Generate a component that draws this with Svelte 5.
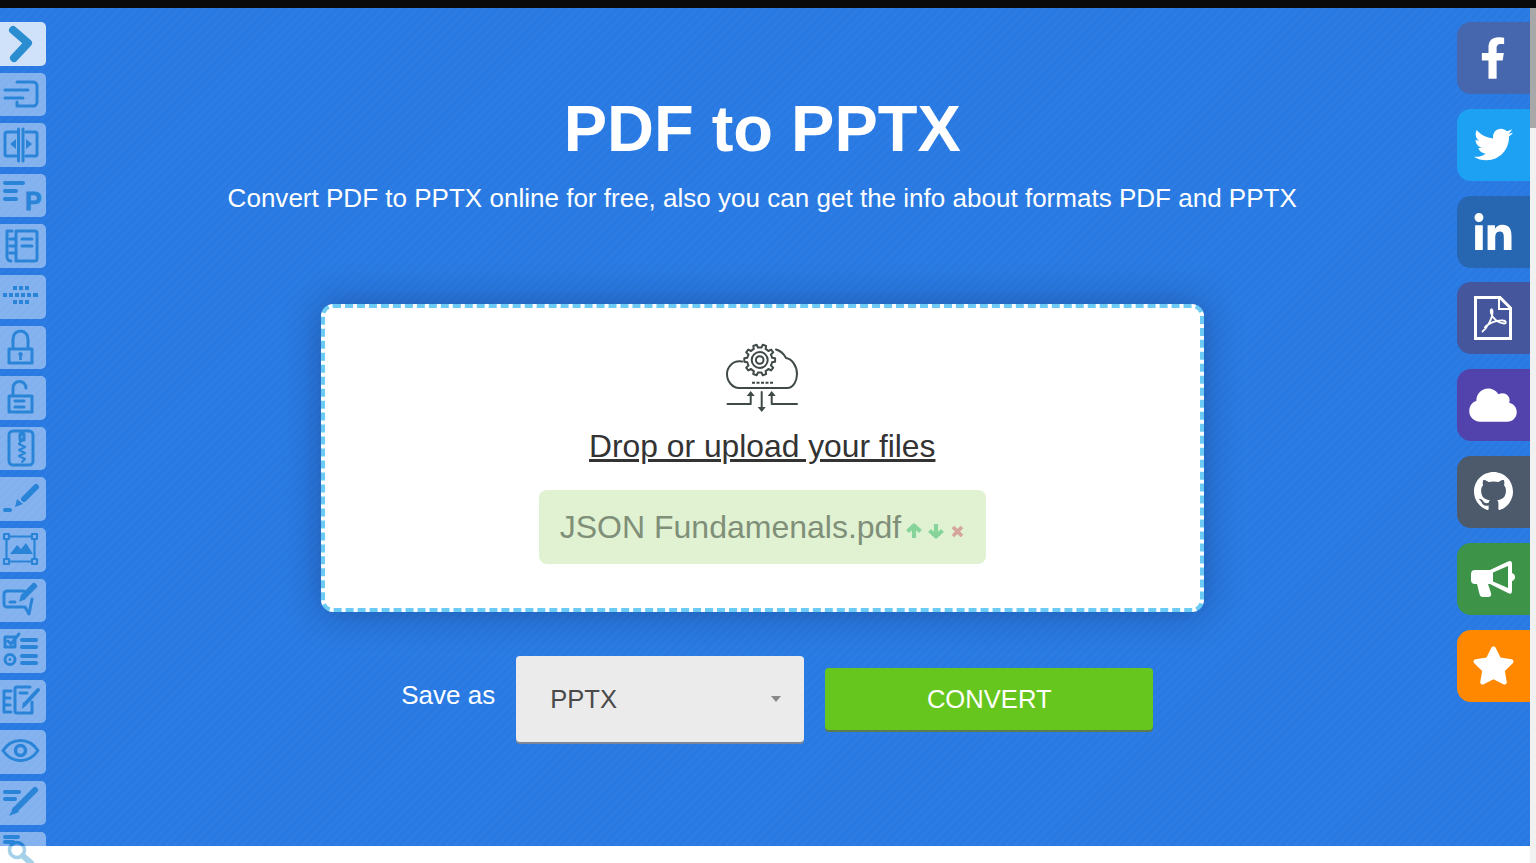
<script>
	// gear outline for the upload icon
	const gearPath = (cx, cy, r1, r2, teeth) => {
		let d = '';
		const step = (Math.PI * 2) / teeth;
		for (let i = 0; i < teeth; i++) {
			const a = i * step;
			const pts = [
				[r1, a - step * 0.5],
				[r1, a - step * 0.28],
				[r2, a - step * 0.18],
				[r2, a + step * 0.18],
				[r1, a + step * 0.28]
			];
			for (const [r, t] of pts) {
				d += (d ? 'L' : 'M') + (cx + r * Math.cos(t)).toFixed(2) + ' ' + (cy + r * Math.sin(t)).toFixed(2);
			}
		}
		return d + 'Z';
	};

	const gear = gearPath(70.7, 30, 12.5, 15.5, 10);
</script>

<div class="page">
	<div class="blackbar"></div>
	<div class="middle">
		<div class="hero">
			<nav class="rail-left">
				<a class="tool first" href="#t">
					<svg viewBox="0 0 46 44"><path class="thick" d="M13 8L28 21L14 36" /></svg>
				</a>
				<a class="tool" href="#t">
					<svg viewBox="0 0 46 44"><path d="M17 9H33a4 4 0 0 1 4 4V29a4 4 0 0 1-4 4H17V29M5 17H28M5 25H23" /></svg>
				</a>
				<a class="tool" href="#t">
					<svg viewBox="0 0 46 44">
						<path d="M17 9H7a2 2 0 0 0-2 2V31a2 2 0 0 0 2 2H17M26 9H35a2 2 0 0 1 2 2V31a2 2 0 0 1-2 2H26M18.500 6V38M23 6V38" />
						<path class="solid" d="M10 21L16 16V26ZM32 21L26 16V26Z" />
					</svg>
				</a>
				<a class="tool" href="#t">
					<svg viewBox="0 0 46 44">
						<path class="mid" d="M5 9H23M5 17H16M5 25H16" />
						<text x="25" y="36" class="letter">P</text>
					</svg>
				</a>
				<a class="tool" href="#t">
					<svg viewBox="0 0 46 44">
						<path d="M16 7H35a2 2 0 0 1 2 2V35a2 2 0 0 1-2 2H16ZM12 7H7V33a4 4 0 0 0 4 4M10 15H15M10 22H15M10 29H15M22 15H32M22 22H32" />
					</svg>
				</a>
				<a class="tool" href="#t">
					<svg viewBox="0 0 46 44">
						<path class="keys" d="M13 13H17M19 13H23M25 13H29M3 20H7M9 20H13M15 20H19M21 20H25M27 20H31M33 20H38M13 27H17M19 27H23M25 27H29" />
					</svg>
				</a>
				<a class="tool" href="#t">
					<svg viewBox="0 0 46 44">
						<path d="M9 23H32V37H9ZM13 23V13a7.500 8 0 0 1 15 0V23" />
						<path class="solid" d="M20.500 26a2.200 2.200 0 0 1 1.300 4V34H19.200V30a2.200 2.200 0 0 1 1.300-4Z" />
					</svg>
				</a>
				<a class="tool" href="#t">
					<svg viewBox="0 0 46 44">
						<path d="M9 20H32V36H9ZM13 20V12a6.500 6.500 0 0 1 13 0M15 25H24M15 31H24" />
					</svg>
				</a>
				<a class="tool" href="#t">
					<svg viewBox="0 0 46 44">
						<path d="M13 4H29a4 4 0 0 1 4 4V34a4 4 0 0 1-4 4H13a4 4 0 0 1-4-4V8a4 4 0 0 1 4-4ZM20 7H24V13H20Z" />
						<path class="thin" d="M22 13L19 17L25 20L19 23L25 26L19 29L25 32L22 35" />
					</svg>
				</a>
				<a class="tool" href="#t">
					<svg viewBox="0 0 46 44">
						<path class="fat" d="M36 10L24 22" />
						<path class="solid" d="M15 30L17 22L23 27Z" />
						<path class="mid" d="M5 33H10" />
					</svg>
				</a>
				<a class="tool" href="#t">
					<svg viewBox="0 0 46 44">
						<path class="thin" d="M4 6H9V11H4ZM32 6H37V11H32ZM4 31H9V36H4ZM32 31H37V36H32ZM9 8.500H32M9 33.500H32M6.500 11V31M34.500 11V31" />
						<path class="solid" d="M10 26L17 17L21 21L26 15L33 26Z" />
					</svg>
				</a>
				<a class="tool" href="#t">
					<svg viewBox="0 0 46 44">
						<path d="M24 12H7a3 3 0 0 0-3 3V25a3 3 0 0 0 3 3H25L29 35L32 20M10 23H15" />
						<path class="fat" d="M34 7L24 17" />
						<path class="solid" d="M19 23L21 16L26 20Z" />
					</svg>
				</a>
				<a class="tool" href="#t">
					<svg viewBox="0 0 46 44">
						<path d="M5 8H15V18H5ZM8 12L11 15L19 5" />
						<circle cx="10" cy="30.500" r="5" />
						<circle cx="10" cy="30.500" r="1.500" class="solid" />
						<path class="mid" d="M22 11H36M22 18H36M22 27H36M22 34H36" />
					</svg>
				</a>
				<a class="tool" href="#t">
					<svg viewBox="0 0 46 44">
						<path d="M11 11H4V32H11M5 18H10M5 25H10M30 7H17a2 2 0 0 0-2 2V31a2 2 0 0 0 2 2H32V22M20 13H27" />
						<path class="mid" d="M38 10L26 23" />
						<path class="solid" d="M22 29L23 22L27 25Z" />
					</svg>
				</a>
				<a class="tool" href="#t">
					<svg viewBox="0 0 46 44">
						<path d="M3 20.500C12 7 29 7 38 20.500C29 34 12 34 3 20.500Z" />
						<circle cx="20.500" cy="20.500" r="5" class="ring" />
					</svg>
				</a>
				<a class="tool" href="#t">
					<svg viewBox="0 0 46 44">
						<path class="mid" d="M5 11H19M5 18H15" />
						<path class="fat" d="M35 9L15 29" />
						<path class="solid" d="M9 35L14 26L19 31Z" />
					</svg>
				</a>
				<a class="tool" href="#t">
					<svg viewBox="0 0 46 44">
						<path class="mid" d="M5 5H18M5 10H13" />
						<circle cx="17" cy="18" r="7.500" class="ring" />
						<path class="fat" d="M23 24L31 31" />
					</svg>
				</a>
			</nav>

			<main class="content">
				<h1>PDF to PPTX</h1>
				<p class="lead">Convert PDF to PPTX online for free, also you can get the info about formats PDF and PPTX</p>

				<section class="drop">
					<svg class="upload" viewBox="33 10 80 75">
						<path d="M53 31.500C43 30 38 38 38 44C38 52 44 58 50 58H98C105 58 108 50 108 44C108 36 103 29 97 28C95 24 92 21 87 19.500" />
						<path d={gear} />
						<circle cx="70.700" cy="30" r="8" />
						<circle cx="70.700" cy="30" r="3.800" />
						<path class="dots" d="M63 52.700H84" />
						<path d="M38.500 74H61.700V64M72.700 62V78M108 74H82.700V64" />
						<path class="head" d="M57.700 66L61.700 61L65.700 66ZM68.700 77L72.700 82L76.700 77ZM78.700 66L82.700 61L86.700 66Z" />
					</svg>
					<a class="pick" href="#u">Drop or upload your files</a>
					<div class="file">
						<span class="name">JSON Fundamenals.pdf</span>
						<svg class="ctl up" viewBox="0 0 16 16"><path d="M8 15V3M1.500 8.500L8 2.500L14.500 8.500" /></svg>
						<svg class="ctl up" viewBox="0 0 16 16"><path d="M8 1V13M1.500 7.500L8 13.500L14.500 7.500" /></svg>
						<svg class="ctl del" viewBox="0 0 13 13"><path d="M2 2L11 11M11 2L2 11" /></svg>
					</div>
				</section>

				<div class="actions">
					<span class="saveas">Save as</span>
					<div class="select">
						<span>PPTX</span>
						<i class="caret"></i>
					</div>
					<button class="convert">CONVERT</button>
				</div>
			</main>

			<aside class="rail-right">
				<a class="share" style="background:#4666ae" href="#s">
					<svg width="26" height="42" viewBox="0 0 320 512"><path d="M279.14 288l14.22-92.66h-88.91v-60.130c0-25.350 12.420-50.060 52.240-50.060h40.420V6.260S260.430 0 225.360 0c-73.220 0-121.080 44.380-121.080 124.720v70.620H22.890V288h81.390v224h100.170V288z" /></svg>
				</a>
				<a class="share" style="background:#1da1f2" href="#s">
					<svg width="39" height="39" viewBox="0 0 512 512"><path d="M459.370 151.716c.325 4.548.325 9.097.325 13.645 0 138.720-105.583 298.558-298.558 298.558-59.452 0-114.680-17.219-161.137-47.106 8.447.974 16.568 1.299 25.340 1.299 49.055 0 94.213-16.568 130.274-44.832-46.132-.975-84.792-31.188-98.112-72.772 6.498.974 12.995 1.624 19.818 1.624 9.421 0 18.843-1.300 27.614-3.573-48.081-9.747-84.143-51.980-84.143-102.985v-1.299c13.969 7.797 30.214 12.670 47.431 13.319-28.264-18.843-46.781-51.005-46.781-87.391 0-19.492 5.197-37.360 14.294-52.954 51.655 63.675 129.300 105.258 216.365 109.807-1.624-7.797-2.599-15.918-2.599-24.040 0-57.828 46.782-104.934 104.934-104.934 30.213 0 57.502 12.670 76.670 33.137 23.715-4.548 46.456-13.320 66.599-25.340-7.798 24.366-24.366 44.833-46.132 57.827 21.117-2.273 41.584-8.122 60.426-16.243-14.292 20.791-32.161 39.308-52.628 54.253z" /></svg>
				</a>
				<a class="share" style="background:#2767b1" href="#s">
					<svg width="40" height="37" viewBox="0 0 448 448"><path d="M100.280 448H7.400V148.900h92.880zM53.790 108.100C24.090 108.100 0 83.500 0 53.800a53.790 53.790 0 0 1 107.580 0c0 29.700-24.100 54.300-53.790 54.300zM447.900 448h-92.680V302.400c0-34.700-.7-79.200-48.290-79.200-48.290 0-55.690 37.700-55.690 76.700V448h-92.780V148.900h89.080v40.800h1.300c12.400-23.500 42.690-48.300 87.880-48.300 94 0 111.280 61.900 111.280 142.300V448z" /></svg>
				</a>
				<a class="share" style="background:#45569c" href="#s">
					<svg class="line" width="38" height="44" viewBox="0 0 38 44">
						<path d="M1.500 1.500H26L36.500 12V42.500H1.500Z" />
						<path class="fold" d="M25 1.500V13H36.500" />
						<path class="swoosh" d="M8 36C13 32 19 22 18.500 15C18 12 16 13 17 17C18 22 24 27 30 27.500C33 27.500 32 24.500 29 24.500C23 24 14 27 10.500 32" />
					</svg>
				</a>
				<a class="share" style="background:#5243ac" href="#s">
					<svg width="48" height="38" viewBox="0 0 640 512"><path d="M537.600 226.600c4.100-10.700 6.400-22.400 6.400-34.600 0-53-43-96-96-96-19.700 0-38.100 6-53.300 16.200C367 64.200 315.300 32 256 32c-88.400 0-160 71.600-160 160 0 2.700.1 5.400.2 8.100C40.200 219.800 0 273.200 0 336c0 79.500 64.500 144 144 144h368c70.700 0 128-57.300 128-128 0-61.900-44-113.600-102.400-125.400z" /></svg>
				</a>
				<a class="share" style="background:#4c5a6b" href="#s">
					<svg width="39" height="39" viewBox="0 0 16 16"><path d="M8 0C3.580 0 0 3.580 0 8c0 3.540 2.290 6.530 5.470 7.590.4.070.55-.17.55-.38 0-.19-.01-.82-.01-1.490-2.010.37-2.530-.49-2.690-.94-.09-.23-.48-.94-.82-1.130-.28-.15-.68-.52-.01-.53.63-.01 1.080.58 1.230.82.72 1.210 1.870.87 2.330.66.070-.52.280-.87.510-1.070-1.780-.2-3.640-.89-3.640-3.950 0-.87.310-1.590.820-2.150-.08-.2-.36-1.020.08-2.120 0 0 .67-.21 2.200.82.640-.18 1.320-.27 2-.27.680 0 1.360.09 2 .27 1.530-1.040 2.200-.82 2.200-.82.440 1.100.160 1.920.080 2.120.510.560.820 1.270.820 2.150 0 3.070-1.870 3.750-3.650 3.950.290.250.540.730.540 1.480 0 1.070-.01 1.930-.01 2.200 0 .21.150.46.550.38A8.013 8.013 0 0016 8c0-4.420-3.580-8-8-8z" /></svg>
				</a>
				<a class="share" style="background:#3d9448" href="#s">
					<svg width="44" height="38" viewBox="0 0 44 38"><path fill-rule="evenodd" d="M4 10H19L37 1.500Q41 0 41 4V13Q44 14 44 17Q44 20 41 21V31Q41 35 37 33L19 24H17L20 33Q21 37 17 37H12Q9 37 8.500 34L6 24H4Q0 24 0 20V14Q0 10 4 10ZM22 12.500V21.500L37 28V6Z" /></svg>
				</a>
				<a class="share" style="background:#ff8800" href="#s">
					<svg width="43" height="39" viewBox="0 0 576 512"><path d="M259.300 17.800L194 150.200 47.900 171.500c-26.200 3.800-36.700 36.100-17.700 54.600l105.700 103-25 145.500c-4.500 26.300 23.200 46 46.400 33.700L288 439.600l130.700 68.700c23.200 12.200 50.900-7.400 46.400-33.700l-25-145.500 105.700-103c19-18.500 8.500-50.800-17.700-54.600L382 150.200 316.700 17.800c-11.700-23.600-45.600-23.900-57.400 0z" /></svg>
				</a>
			</aside>
		</div>
		<div class="scrollbar"><div class="thumb"></div></div>
	</div>
	<div class="foot"></div>
</div>

<style>
	:global(body) {
		margin: 0;
		background: #fff;
		font-family: "Liberation Sans", Arial, sans-serif;
	}

	.page {
		height: 863px;
		overflow: hidden;
		display: flex;
		flex-direction: column;
		position: relative;
	}

	.blackbar {
		height: 8px;
		flex: none;
		background: #0a0a0a;
	}

	.middle {
		flex: 1;
		display: flex;
		min-height: 0;
	}

	.hero {
		flex: 1;
		position: relative;
		background: repeating-linear-gradient(135deg, #2b7ce4 0 3px, #2979e0 3px 6px);
	}

	.foot {
		height: 17px;
		flex: none;
		background: #fff;
	}

	.scrollbar {
		width: 6.5px;
		flex: none;
		background: #f1f1f1;
		margin-bottom: -17px;
		z-index: 2;
	}

	.thumb {
		height: 120px;
		background: #a8a8a8;
	}

	/* left tools */
	.rail-left {
		position: absolute;
		left: 0;
		top: 14px;
		display: flex;
		flex-direction: column;
		gap: 7px;
		z-index: 1;
	}

	.tool {
		display: block;
		width: 46px;
		height: 43.6px;
		flex: none;
		background: #fff;
		border-radius: 0 5px 5px 0;
		opacity: 0.42;
	}

	.tool.first {
		opacity: 0.78;
	}

	.tool svg {
		display: block;
		width: 46px;
		height: 44px;
		fill: none;
		stroke: #2a93cc;
		stroke-width: 3;
		stroke-linecap: round;
		stroke-linejoin: round;
	}

	.tool .thick {
		stroke-width: 8;
	}

	.tool .fat {
		stroke-width: 6;
	}

	.tool .mid {
		stroke-width: 4;
	}

	.tool .keys {
		stroke-width: 4.200;
		stroke-linecap: butt;
	}

	.tool .thin {
		stroke-width: 2.200;
	}

	.tool .ring {
		stroke-width: 3.600;
	}

	.tool .solid {
		fill: #2a93cc;
		stroke: none;
	}

	.tool .letter {
		font-family: "Liberation Sans", Arial, sans-serif;
		font-size: 25px;
		font-weight: 700;
		fill: #2a93cc;
		stroke: #2a93cc;
		stroke-width: 0.8;
	}

	/* centre column */
	.content {
		padding-right: 5px;
		display: flex;
		flex-direction: column;
		align-items: center;
		color: #fff;
	}

	h1 {
		margin: 82px 0 0;
		font-size: 65px;
		line-height: 78px;
		font-weight: 700;
	}

	.lead {
		margin: 9px 0 0;
		font-size: 26.040px;
		line-height: 42px;
	}

	.drop {
		width: 883px;
		height: 308px;
		box-sizing: border-box;
		margin-top: 85px;
		padding-top: 32px;
		display: flex;
		flex-direction: column;
		align-items: center;
		background: #fff;
		border: 4px dashed #6ccbf4;
		border-radius: 12px;
		box-shadow: 0 0 36px rgba(20, 40, 90, 0.42);
	}

	.upload {
		width: 80px;
		height: 75px;
		flex: none;
		fill: none;
		stroke: #3f4a48;
		stroke-width: 2;
		stroke-linecap: round;
		stroke-linejoin: round;
	}

	.upload .dots {
		stroke-width: 2;
		stroke-linecap: butt;
		stroke-dasharray: 3 1.500;
	}

	.upload .head {
		fill: #3f4a48;
		stroke: none;
	}

	.pick {
		margin-top: 13px;
		font-size: 31.800px;
		line-height: 37px;
		color: #333;
		text-decoration: underline;
	}

	.file {
		margin-top: 25px;
		width: 447px;
		height: 74px;
		box-sizing: border-box;
		padding-left: 21px;
		display: flex;
		align-items: center;
		background: #e1f2d3;
		border-radius: 8px;
	}

	.name {
		font-size: 32px;
		color: #7f8f78;
	}

	.ctl {
		flex: none;
		width: 16px;
		height: 16px;
		margin: 8px 0 0 6px;
		fill: none;
		stroke-width: 4.200;
		stroke-linejoin: round;
	}

	.ctl:first-of-type {
		margin-left: 5px;
	}

	.ctl.up {
		stroke: #87d49a;
	}

	.ctl.del {
		width: 13px;
		height: 13px;
		margin-left: 7px;
		stroke: #d5a79c;
		stroke-width: 3.800;
	}

	.actions {
		margin-top: 44px;
		padding-left: 30px;
		display: flex;
		align-items: center;
		gap: 21px;
	}

	.saveas {
		font-size: 26px;
		margin-bottom: 8px;
	}

	.select {
		width: 288px;
		height: 86px;
		box-sizing: border-box;
		padding: 0 23px 0 34px;
		display: flex;
		align-items: center;
		justify-content: space-between;
		background: #ebebeb;
		border-radius: 4px;
		box-shadow: 0 2px 0 #7a8796;
		font-size: 25.600px;
		color: #4a4a4a;
	}

	.caret {
		width: 0;
		height: 0;
		border-left: 5px solid transparent;
		border-right: 5px solid transparent;
		border-top: 6px solid #888;
	}

	.convert {
		width: 328px;
		height: 62px;
		padding: 0;
		border: 0;
		border-radius: 4px;
		background: #66c61e;
		box-shadow: 0 2px 0 #5c7a52;
		color: #fff;
		font-family: inherit;
		font-size: 25.600px;
	}

	/* right share links */
	.rail-right {
		position: absolute;
		right: 0;
		top: 14px;
		display: flex;
		flex-direction: column;
		gap: 14.800px;
	}

	.share {
		width: 72.500px;
		height: 72px;
		box-sizing: border-box;
		display: flex;
		align-items: center;
		justify-content: center;
		border-radius: 14px 0 0 14px;
	}

	.share svg {
		fill: #fff;
	}

	.share .line {
		fill: none;
		stroke: #fff;
		stroke-width: 3;
	}

	.share .line .fold {
		stroke-width: 2;
	}

	.share .line .swoosh {
		stroke-width: 1.800;
	}
</style>
